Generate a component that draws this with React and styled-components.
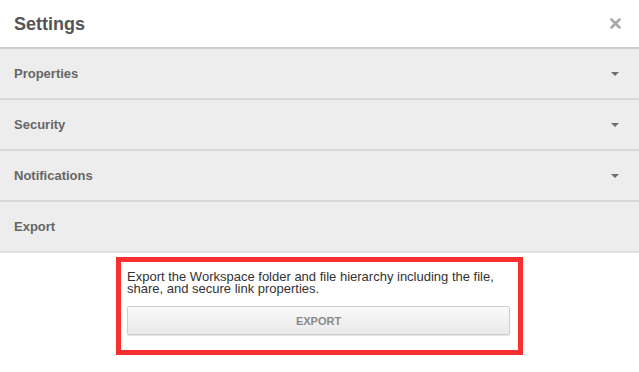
import React from 'react';
import styled, { createGlobalStyle } from 'styled-components';

const GlobalStyle = createGlobalStyle`
  *, *::before, *::after {
    box-sizing: border-box;
  }

  html, body {
    margin: 0;
    padding: 0;
    background: #fff;
    font-family: "Liberation Sans", Arial, sans-serif;
  }
`;

const Dialog = styled.div`
  width: 639px;
  height: 372px;
  background: #fff;
  overflow: hidden;
`;

const Header = styled.div`
  height: 49px;
  display: flex;
  align-items: center;
  justify-content: space-between;
  padding: 0 14px;
  border-bottom: 2px solid #cdcdcd;
`;

const Title = styled.h1`
  margin: 0;
  font-size: 18px;
  font-weight: bold;
  color: #555;
  padding-top: 1px;
`;

const CloseButton = styled.button`
  border: 0;
  background: none;
  padding: 0;
  margin-right: 4px;
  display: flex;
  cursor: pointer;
`;

const Section = styled.div`
  height: 51px;
  display: flex;
  align-items: center;
  justify-content: space-between;
  padding: 0 14px;
  background: #ededed;
  border-bottom: 2px solid ${(p) => (p.last ? '#e2e2e2' : '#d8d8d8')};
`;

const SectionLabel = styled.span`
  font-size: 13px;
  font-weight: bold;
  color: #666;
`;

const Caret = styled.span`
  width: 0;
  height: 0;
  margin-right: 6px;
  border-left: 4px solid transparent;
  border-right: 4px solid transparent;
  border-top: 4px solid #6e6e6e;
`;

const Panel = styled.div`
  width: 407px;
  margin: 4px auto 0;
  border: 5px solid #fa2f2f;
  padding: 9px 8px 15px 6px;
`;

const Description = styled.p`
  margin: 0 0 11px;
  font-size: 13px;
  line-height: 12px;
  color: #333;
`;

const ExportButton = styled.button`
  display: block;
  width: 100%;
  height: 29px;
  border: 1px solid #cfcfcf;
  border-radius: 2px;
  background: linear-gradient(#fafafa, #e9e9e9);
  box-shadow: 0 1px 1px rgba(0, 0, 0, 0.12);
  font-family: inherit;
  font-size: 11px;
  font-weight: bold;
  color: #8a8a8a;
  cursor: pointer;
`;

const sections = [
  { label: 'Properties', caret: true },
  { label: 'Security', caret: true },
  { label: 'Notifications', caret: true },
  { label: 'Export', caret: false },
];

function CloseIcon() {
  return (
    <svg width="11" height="11" viewBox="0 0 11 11">
      <path d="M1.5 1.5 L9.5 9.5 M9.5 1.5 L1.5 9.5" stroke="#a9a9a9" strokeWidth="2.6" strokeLinecap="round" />
    </svg>
  );
}

export default function App() {
  return (
    <>
      <GlobalStyle />
      <Dialog>
        <Header>
          <Title>Settings</Title>
          <CloseButton aria-label="Close">
            <CloseIcon />
          </CloseButton>
        </Header>
        {sections.map((s, i) => (
          <Section key={s.label} last={i === sections.length - 1}>
            <SectionLabel>{s.label}</SectionLabel>
            {s.caret && <Caret />}
          </Section>
        ))}
        <Panel>
          <Description>
            Export the Workspace folder and file hierarchy including the file,
            share, and secure link properties.
          </Description>
          <ExportButton>EXPORT</ExportButton>
        </Panel>
      </Dialog>
    </>
  );
}
